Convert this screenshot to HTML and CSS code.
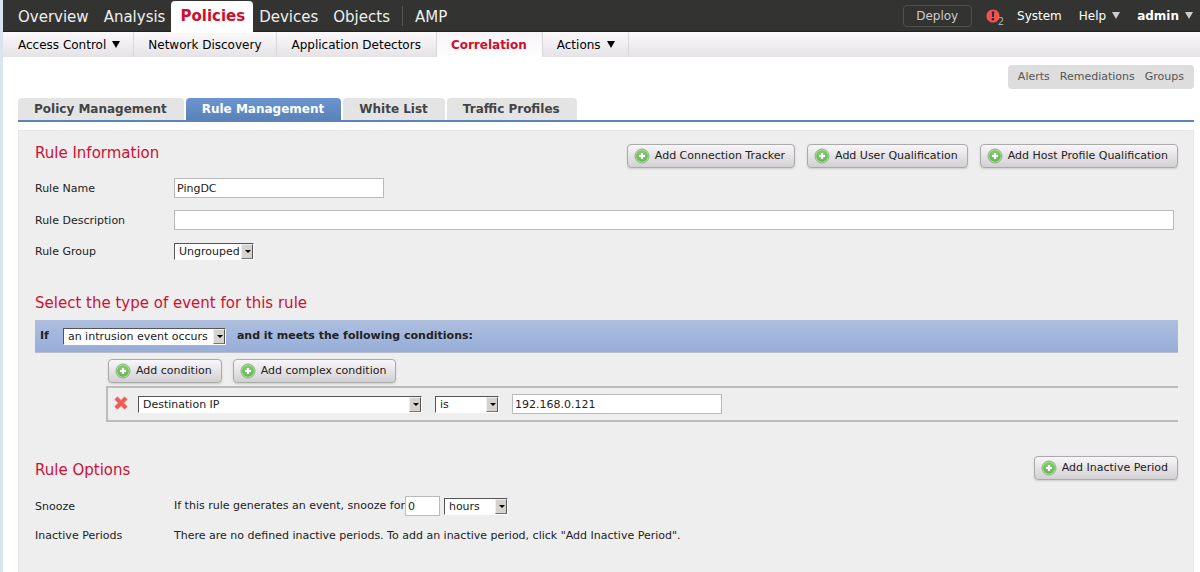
FILE: index.html
```html
<!DOCTYPE html>
<html lang="en">
<head>
<meta charset="utf-8">
<title>Rule Management</title>
<link rel="stylesheet" href="styles.css">
</head>
<body>
<svg class="defs" aria-hidden="true">
  <defs>
    <radialGradient id="green" cx="50%" cy="35%" r="65%"><stop offset="0" stop-color="#93d67c"/><stop offset="1" stop-color="#62b052"/></radialGradient>
    <symbol id="plus" viewBox="0 0 16 16">
      <circle cx="8" cy="8" r="7" fill="#b9dfae" stroke="#7fba74" stroke-width="1"/>
      <circle cx="8" cy="8" r="5.8" fill="url(#green)"/>
      <path d="M8 5v6M5 8h6" stroke="#fff" stroke-width="2"/>
    </symbol>
  </defs>
</svg>
<header>
  <div class="topbar">
    <nav class="main-nav" aria-label="Main">
      <a href="#">Overview</a>
      <a href="#">Analysis</a>
      <a href="#" class="current">Policies</a>
      <a href="#">Devices</a>
      <a href="#">Objects</a>
      <a href="#" class="divided">AMP</a>
    </nav>
    <div class="tools">
      <button type="button" class="deploy">Deploy</button>
      <a href="#" class="alert" aria-label="2 alerts">
        <svg width="14" height="14" viewBox="0 0 14 14"><circle cx="7" cy="7" r="6.6" fill="#f4514f"/><path d="M5.7 2.5h2.6L7.8 8H6.2z" fill="#2b2b2a"/><circle cx="7" cy="10.3" r="1.3" fill="#2b2b2a"/></svg>
        <span>2</span>
      </a>
      <a href="#" class="tool">System</a>
      <a href="#" class="tool">Help <span class="caret"></span></a>
      <a href="#" class="tool user">admin <span class="caret"></span></a>
    </div>
  </div>
  <nav class="sub-nav" aria-label="Policies">
    <a href="#">Access Control <span class="caret"></span></a>
    <a href="#">Network Discovery</a>
    <a href="#">Application Detectors</a>
    <a href="#" class="current">Correlation</a>
    <a href="#">Actions <span class="caret"></span></a>
  </nav>
</header>
<main>
  <nav class="pill" aria-label="Related">
    <a href="#">Alerts</a>
    <a href="#">Remediations</a>
    <a href="#">Groups</a>
  </nav>
  <nav class="tabs" aria-label="Correlation">
    <a href="#">Policy Management</a>
    <a href="#" class="current">Rule Management</a>
    <a href="#">White List</a>
    <a href="#">Traffic Profiles</a>
  </nav>
  <form class="panel">
    <section>
      <div class="section-head">
        <h2>Rule Information</h2>
        <div class="actions">
          <button type="button" class="btn"><svg class="icon"><use href="#plus"/></svg>Add Connection Tracker</button>
          <button type="button" class="btn"><svg class="icon"><use href="#plus"/></svg>Add User Qualification</button>
          <button type="button" class="btn"><svg class="icon"><use href="#plus"/></svg>Add Host Profile Qualification</button>
        </div>
      </div>
      <div class="fields">
        <label for="name">Rule Name</label>
        <div><input id="name" class="text medium" type="text" value="PingDC"></div>
        <label for="desc">Rule Description</label>
        <div class="full"><input id="desc" class="text wide" type="text"></div>
        <label for="group">Rule Group</label>
        <div><span class="select group"><select id="group"><option>Ungrouped</option></select></span></div>
      </div>
    </section>
    <section class="event">
      <div class="section-head"><h2>Select the type of event for this rule</h2></div>
      <div class="if-bar">
        <label for="event">If</label>
        <span class="select occurs"><select id="event"><option>an intrusion event occurs</option></select></span>
        <span>and it meets the following conditions:</span>
      </div>
      <div class="conditions">
        <div class="cond-actions">
          <button type="button" class="btn"><svg class="icon"><use href="#plus"/></svg>Add condition</button>
          <button type="button" class="btn"><svg class="icon"><use href="#plus"/></svg>Add complex condition</button>
        </div>
        <div class="condition">
          <button type="button" class="remove" aria-label="Remove condition"><svg width="16" height="16" viewBox="0 0 16 16"><path d="M3 2l10 10M13 2L3 12" stroke="#f7aaa5" stroke-width="5"/><path d="M3 2l10 10M13 2L3 12" stroke="#ee5a56" stroke-width="3.6"/></svg></button>
          <span class="select field"><select aria-label="Field"><option>Destination IP</option></select></span>
          <span class="select operator"><select aria-label="Operator"><option>is</option></select></span>
          <input class="text medium" type="text" aria-label="Value" value="192.168.0.121">
        </div>
      </div>
    </section>
    <section class="options">
      <div class="section-head">
        <h2>Rule Options</h2>
        <div class="actions"><button type="button" class="btn"><svg class="icon"><use href="#plus"/></svg>Add Inactive Period</button></div>
      </div>
      <div class="fields">
        <label for="snooze">Snooze</label>
        <div class="snooze"><span>If this rule generates an event, snooze for</span><input id="snooze" class="text tiny" type="text" value="0"><span class="select unit"><select aria-label="Snooze unit"><option>hours</option></select></span></div>
        <span>Inactive Periods</span>
        <span>There are no defined inactive periods. To add an inactive period, click "Add Inactive Period".</span>
      </div>
    </section>
  </form>
</main>
</body>
</html>
```
FILE: styles.css
```css
* { box-sizing: border-box; }
html { background: #fff; }
body {
  margin: 0;
  min-height: 100vh;
  border-left: 3px solid #d9e4f3;
  font: 11px/16px "DejaVu Sans", Verdana, sans-serif;
  color: #222;
  display: flex;
  flex-direction: column;
}
a { color: inherit; text-decoration: none; }
button, input, select { font: inherit; color: inherit; margin: 0; }
.defs { position: absolute; width: 0; height: 0; }

.topbar {
  display: flex;
  justify-content: space-between;
  height: 32px;
  background: #333432;
  border-bottom: 1px solid #222;
  color: #eee;
}
.main-nav { display: flex; align-items: center; padding-left: 7px; font-size: 15px; }
.main-nav a { padding: 2px 7px 0 8px; line-height: 30px; }
.main-nav .current {
  align-self: flex-start;
  height: 32px;
  margin: 1px -2px 0 -1px;
  padding: 0 8px 0 9px;
  background: #fff;
  color: #d00d2c;
  font-weight: bold;
  border-radius: 4px 4px 0 0;
}
.main-nav .divided { position: relative; margin-left: 5px; padding-left: 13px; }
.main-nav .divided::before { content: ""; position: absolute; left: 0; top: 6px; height: 20px; border-left: 1px solid #555; }
.tools { display: flex; align-items: center; padding-right: 7px; font-size: 12px; }
.deploy {
  height: 22px;
  width: 69px;
  padding: 0;
  border: 1px solid #50514f;
  border-radius: 4px;
  background: none;
  color: #ccc;
}
.alert { display: flex; align-items: center; margin-left: 14px; color: #aaa; font-size: 10px; }
.alert span { align-self: flex-end; line-height: 10px; margin: 12px 0 0 -2px; }
.tool { display: flex; align-items: center; gap: 6px; margin-left: 13px; color: #fff; }
.tool + .tool { margin-left: 17px; }
.user { font-weight: bold; }
.caret { border: 4px solid transparent; border-top: 7px solid #ccc; border-bottom: 0; }

.sub-nav {
  display: flex;
  height: 25px;
  background: linear-gradient(#fcf9fc, #e5e3e5);
  font-size: 12px;
  color: #000;
}
.sub-nav a { display: flex; align-items: center; gap: 6px; padding: 0 15px 0 14px; border-right: 1px solid #d8d6d8; }
.sub-nav a:first-child { padding: 0 13px 0 15px; }
.sub-nav a:last-child { padding-right: 13px; }
.sub-nav .current { background: linear-gradient(#f6f3f6, #fff); color: #d00d2c; font-weight: bold; }
.sub-nav .caret { border-width: 7px 4px 0; border-top-color: #000; }

main { flex: 1; display: flex; flex-direction: column; padding: 8px 6px 0 15px; }
.pill {
  align-self: flex-end;
  display: flex;
  gap: 10px;
  padding: 4px 10px;
  background: #ddd;
  border-radius: 4px;
  color: #555;
}
.tabs {
  display: flex;
  gap: 2px;
  margin-top: 9px;
  border-bottom: 2px solid #5b82ba;
  font-size: 12px;
  font-weight: bold;
  color: #444;
}
.tabs a { padding: 3px 17px 3px 16px; background: #e4e4e4; border-radius: 4px 4px 0 0; }
.tabs .current { background: linear-gradient(#6b95d2, #5a82b8); color: #fff; }

.panel { flex: 1; margin-top: 8px; padding: 13px 15px 0 16px; background: #eee; border: 1px solid #e6e6e6; border-bottom: 0; }
.section-head { display: flex; justify-content: space-between; align-items: flex-start; min-height: 24px; }
h2 { margin: 0; font-size: 15px; line-height: 18px; font-weight: normal; color: #cc1133; }
.actions { display: flex; gap: 12px; }
.btn {
  display: flex;
  align-items: center;
  gap: 5px;
  height: 24px;
  padding: 0 9px 0 6px;
  border: 1px solid #aaa;
  border-radius: 4px;
  background: linear-gradient(#f8f6f8, #d2d0d2);
  box-shadow: 0 1px 2px #ccc;
  white-space: nowrap;
}
.icon { width: 16px; height: 16px; }

.fields { display: grid; grid-template-columns: 139px 1fr; align-items: center; row-gap: 12px; margin-top: 10px; }
.full { padding-right: 4px; display: flex; }
.fields > div { display: flex; align-items: center; }
.fields > label { padding-top: 2px; }
.text { height: 20px; padding: 0 2px; border: 1px solid #bbb; background: #fff; }
.medium { width: 210px; }
.wide { flex: 1; }
.tiny { width: 35px; }
.select { position: relative; display: inline-flex; height: 17px; font-weight: normal; }
.select select {
  appearance: none;
  width: 100%;
  height: 100%;
  padding: 0 14px 0 4px;
  border: 1px solid #fff;
  border-top-color: #555;
  border-left-color: #555;
  border-radius: 0;
  background: #fff;
  line-height: 15px;
}
.select::before { content: ""; position: absolute; right: 1px; top: 1px; bottom: 1px; width: 10px; background: #d6d3ce; border: 1px solid #eee; border-right-color: #555; border-bottom-color: #777; pointer-events: none; }
.select::after { content: ""; position: absolute; right: 3px; top: 7px; border: 3px solid transparent; border-top-color: #000; border-bottom: 0; pointer-events: none; }
.group { width: 80px; }
.occurs { width: 163px; }
.field { width: 284px; }
.operator { width: 64px; }
.unit { width: 64px; margin-left: 4px; }

.event { margin-top: 34px; }
.event .section-head { min-height: 26px; }
.if-bar {
  display: flex;
  align-items: center;
  height: 33px;
  padding-left: 5px;
  background: linear-gradient(#aebfde, #a0b5dd 60%, #96add5);
  border-bottom: 1px solid #b8bcc8;
  font-weight: bold;
}
.occurs { margin: 0 11px 0 14px; }
.conditions { padding: 6px 0 0 71px; }
.cond-actions { display: flex; gap: 11px; padding-left: 2px; }
.condition {
  display: flex;
  align-items: center;
  gap: 13px;
  height: 36px;
  margin-top: 3px;
  padding-left: 5px;
  border: 2px solid #bbb;
  border-right: 0;
}
.remove { display: flex; padding: 0; border: 0; background: none; margin-right: -4px; }
.options { margin-top: 34px; }
.options h2 { margin-top: 5px; }
.options .fields { margin-top: 16px; }
```
